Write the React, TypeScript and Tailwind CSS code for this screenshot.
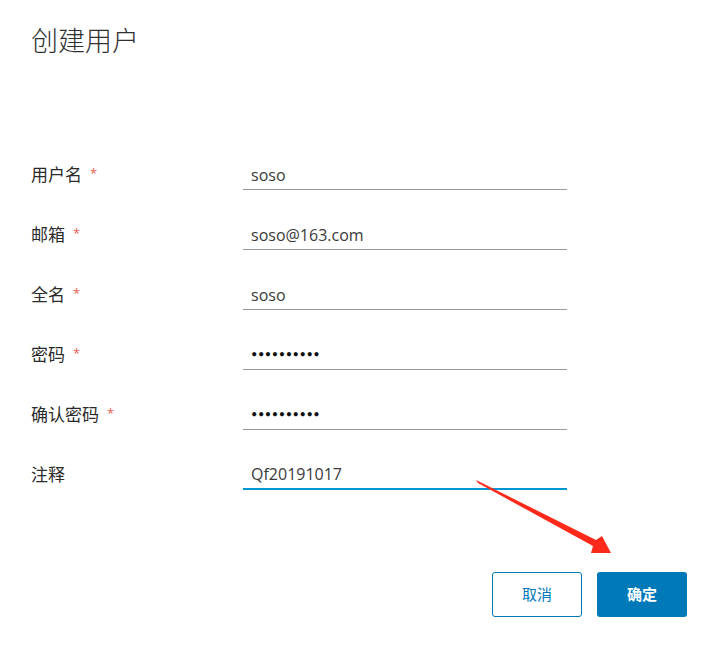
import React from "react";

const font = { fontFamily: '"Open Sans", "Noto Sans CJK SC", sans-serif' };

type Row = { label: string; value: string; required: boolean; password?: boolean; active?: boolean };

const rows: Row[] = [
  { label: "用户名", value: "soso", required: true },
  { label: "邮箱", value: "soso@163.com", required: true },
  { label: "全名", value: "soso", required: true },
  { label: "密码", value: "••••••••••", required: true, password: true },
  { label: "确认密码", value: "••••••••••", required: true, password: true },
  { label: "注释", value: "Qf20191017", required: false, active: true },
];

export default function App() {
  return (
    <div
      className="relative w-[717px] h-[647px] bg-white overflow-hidden font-['Open_Sans','Noto_Sans_CJK_SC',sans-serif]"
      style={font}
    >
      <div className="pl-[31px] pr-[30px] pt-[23px]">
        <h1 className="text-[27px] leading-[36px] font-light text-[#313131]">创建用户</h1>
        <div className="mt-[71px] flex flex-col">
          {rows.map((r) => (
            <div key={r.label} className="flex items-end h-[60px]">
              <div className="w-[212px] h-[28px] flex items-center text-[17px] text-[#2b2b2b] pb-[3px]">
                <span>{r.label}</span>
                {r.required && (
                  <span className="ml-[8px] text-[13px] text-[#e5604f] relative -top-[1px]">*</span>
                )}
              </div>
              <div
                className={
                  r.active
                    ? "w-[324px] h-[28px] border-b-2 border-[#0095d3] flex items-center pl-[8px] pb-[2px] text-[16px] text-[#3a3a3a]"
                    : "w-[324px] h-[28px] border-b border-[#9a9a9a] flex items-center pl-[8px] pb-[2px] text-[16px] text-[#3a3a3a]"
                }
              >
                {r.password ? (
                  <span className="font-['Lato',sans-serif] text-[11px] tracking-[0.55px] text-[#111]">{r.value}</span>
                ) : (
                  <span>{r.value}</span>
                )}
              </div>
            </div>
          ))}
        </div>
        <div className="mt-[82px] flex justify-end gap-[15px]">
          <button className="w-[90px] h-[45px] rounded-[3px] border border-[#0079b8] text-[#0079b8] text-[15px] bg-white">
            取消
          </button>
          <button className="w-[90px] h-[45px] rounded-[3px] bg-[#0079b8] text-white text-[15px] font-bold">
            确定
          </button>
        </div>
      </div>
      <svg className="absolute left-0 top-0 pointer-events-none" width="717" height="647" viewBox="0 0 717 647">
        <polygon
          points="476,480 596,540 602,536 611,553 591,553 593,546 478,483"
          fill="#fd2a1b"
        />
      </svg>
    </div>
  );
}
